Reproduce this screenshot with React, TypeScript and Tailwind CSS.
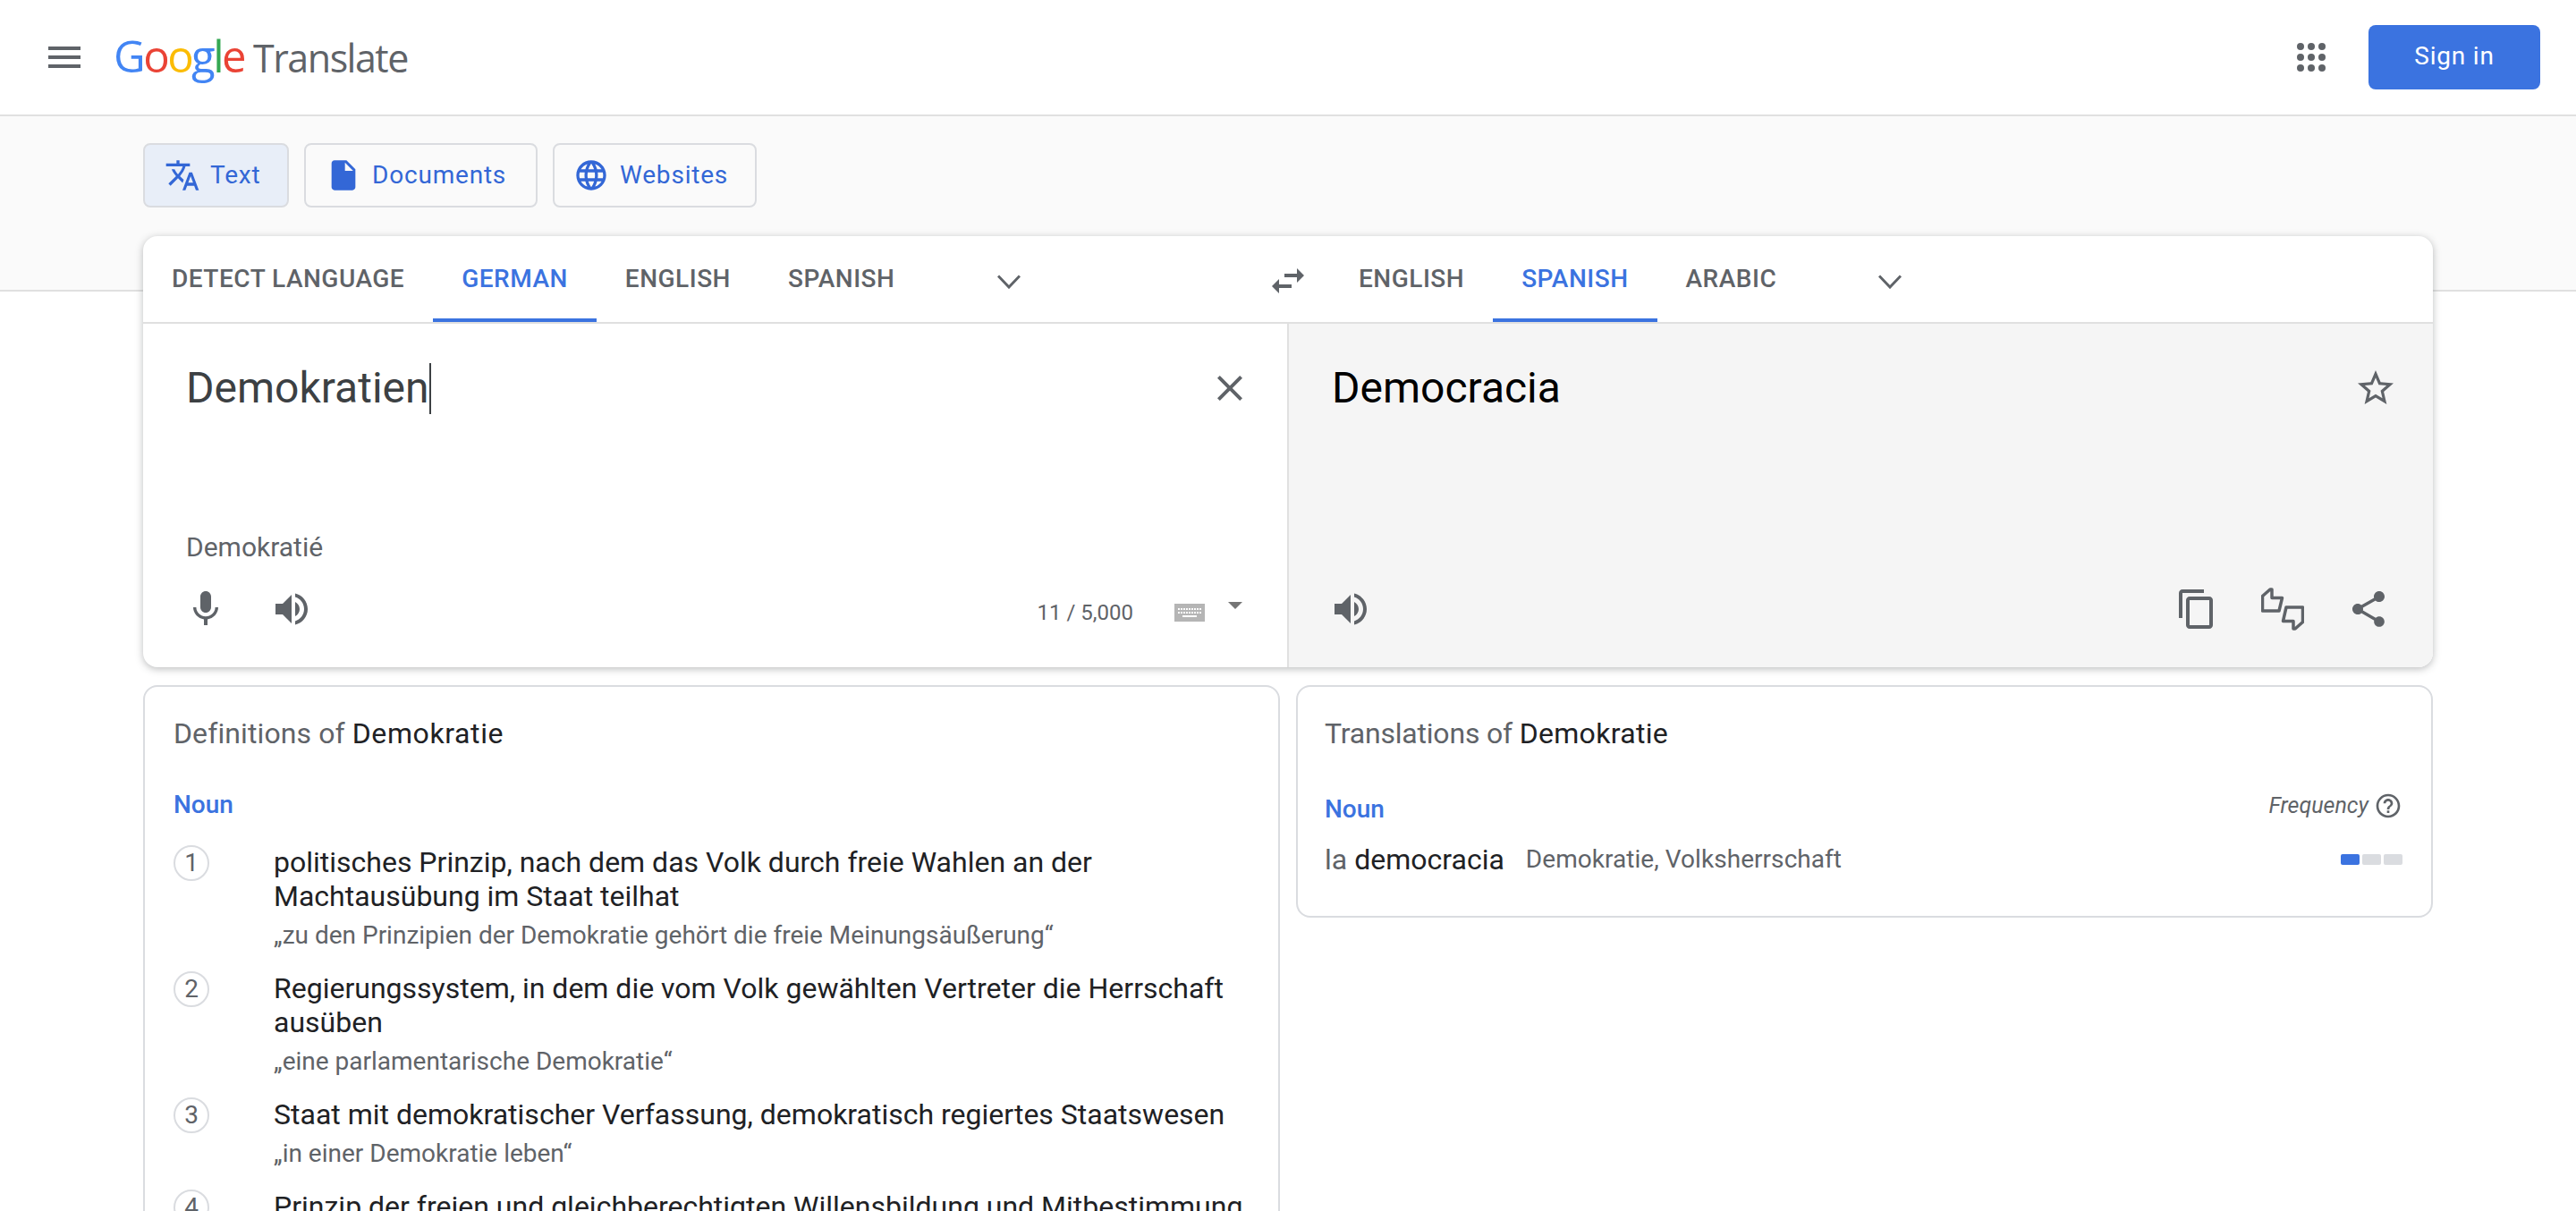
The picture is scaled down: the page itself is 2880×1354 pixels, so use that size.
import React from "react";

const GREY = "#5f6368";

const Icon = ({ d, size = 48, color = GREY }: { d: string; size?: number; color?: string }) => (
  <svg width={size} height={size} viewBox="0 0 24 24" fill={color} className="shrink-0">
    <path d={d} />
  </svg>
);

const paths = {
  menu: "M3 18h18v-2H3v2zm0-5h18v-2H3v2zm0-7v2h18V6H3z",
  translate:
    "M12.87 15.07l-2.54-2.51.03-.03c1.74-1.94 2.98-4.17 3.71-6.53H17V4h-7V2H8v2H1v1.99h11.17C11.5 7.92 10.44 9.75 9 11.35 8.07 10.32 7.3 9.19 6.69 8h-2c.73 1.63 1.73 3.17 2.98 4.56l-5.09 5.02L4 19l5-5 3.11 3.11.76-2.04zM18.5 10h-2L12 22h2l1.12-3h4.75L21 22h2l-4.5-12zm-2.62 7l1.62-4.33L19.12 17h-3.24z",
  doc: "M14 2H6c-1.1 0-1.99.9-1.99 2L4 20c0 1.1.89 2 1.99 2H18c1.1 0 2-.9 2-2V8l-6-6zm-1 7V3.5L18.5 9H13z",
  globe:
    "M11.99 2C6.47 2 2 6.48 2 12s4.47 10 9.99 10C17.52 22 22 17.52 22 12S17.52 2 11.99 2zm6.93 6h-2.95c-.32-1.25-.78-2.45-1.38-3.56 1.84.63 3.37 1.91 4.33 3.56zM12 4.04c.83 1.2 1.48 2.53 1.91 3.96h-3.82c.43-1.43 1.08-2.76 1.91-3.96zM4.26 14C4.1 13.36 4 12.69 4 12s.1-1.36.26-2h3.38c-.08.66-.14 1.32-.14 2 0 .68.06 1.34.14 2H4.26zm.82 2h2.95c.32 1.25.78 2.45 1.38 3.56-1.84-.63-3.37-1.9-4.33-3.56zm2.95-8H5.08c.96-1.66 2.49-2.93 4.33-3.56C8.81 5.55 8.35 6.75 8.03 8zM12 19.96c-.83-1.2-1.48-2.53-1.91-3.96h3.82c-.43 1.43-1.08 2.76-1.91 3.96zM14.34 14H9.66c-.09-.66-.16-1.32-.16-2 0-.68.07-1.35.16-2h4.68c.09.65.16 1.32.16 2 0 .68-.07 1.34-.16 2zm.25 5.56c.6-1.11 1.06-2.31 1.38-3.56h2.95c-.96 1.65-2.49 2.93-4.33 3.56zM16.36 14c.08-.66.14-1.32.14-2 0-.68-.06-1.34-.14-2h3.38c.16.64.26 1.31.26 2s-.1 1.36-.26 2h-3.38z",
  swap: "M6.99 11L3 15l3.99 4v-3H14v-2H6.99v-3zM21 9l-3.99-4v3H10v2h7.01v3L21 9z",
  close:
    "M19 6.41L17.59 5 12 10.59 6.41 5 5 6.41 10.59 12 5 17.59 6.41 19 12 13.41 17.59 19 19 17.59 13.41 12z",
  mic: "M12 14c1.66 0 2.99-1.34 2.99-3L15 5c0-1.66-1.34-3-3-3S9 3.34 9 5v6c0 1.66 1.34 3 3 3zm5.3-3c0 3-2.54 5.1-5.3 5.1S6.7 14 6.7 11H5c0 3.41 2.72 6.23 6 6.72V21h2v-3.28c3.28-.48 6-3.3 6-6.72h-1.7z",
  volume:
    "M3 9v6h4l5 5V4L7 9H3zm13.5 3c0-1.77-1.02-3.29-2.5-4.03v8.05c1.48-.73 2.5-2.25 2.5-4.02zM14 3.23v2.06c2.89.86 5 3.54 5 6.71s-2.11 5.85-5 6.71v2.06c4.01-.91 7-4.49 7-8.77s-2.99-7.86-7-8.77z",
  star: "M22 9.24l-7.19-.62L12 2 9.19 8.63 2 9.24l5.46 4.73L5.82 21 12 17.27 18.18 21l-1.63-7.03L22 9.24zM12 15.4l-3.76 2.27 1-4.28-3.32-2.88 4.38-.38L12 6.1l1.71 4.04 4.38.38-3.32 2.88 1 4.28L12 15.4z",
  copy: "M16 1H4c-1.1 0-2 .9-2 2v14h2V3h12V1zm3 4H8c-1.1 0-2 .9-2 2v14c0 1.1.9 2 2 2h11c1.1 0 2-.9 2-2V7c0-1.1-.9-2-2-2zm0 16H8V7h11v14z",
  share:
    "M18 16.08c-.76 0-1.44.3-1.96.77L8.91 12.7c.05-.23.09-.46.09-.7s-.04-.47-.09-.7l7.05-4.11c.54.5 1.25.81 2.04.81 1.66 0 3-1.34 3-3s-1.34-3-3-3-3 1.34-3 3c0 .24.04.47.09.7L8.04 9.81C7.5 9.31 6.79 9 6 9c-1.66 0-3 1.34-3 3s1.34 3 3 3c.79 0 1.5-.31 2.04-.81l7.12 4.16c-.05.21-.08.43-.08.65 0 1.61 1.31 2.92 2.92 2.92 1.61 0 2.92-1.31 2.92-2.92s-1.31-2.92-2.92-2.92z",
  help: "M11 18h2v-2h-2v2zm1-16C6.48 2 2 6.48 2 12s4.48 10 10 10 10-4.48 10-10S17.52 2 12 2zm0 18c-4.41 0-8-3.59-8-8s3.59-8 8-8 8 3.59 8 8-3.59 8-8 8zm0-14c-2.21 0-4 1.79-4 4h2c0-1.1.9-2 2-2s2 .9 2 2c0 2-3 1.75-3 5h2c0-2.25 3-2.5 3-5 0-2.21-1.79-4-4-4z",
};

const AppsIcon = () => (
  <svg width="32" height="32" viewBox="0 0 32 32" fill={GREY} className="shrink-0">
    {[4, 16, 28].map((y) =>
      [4, 16, 28].map((x) => <circle key={`${x}-${y}`} cx={x} cy={y} r="4" />)
    )}
  </svg>
);

const Chevron = () => (
  <svg width="26" height="16" viewBox="0 0 26 16" fill="none" stroke={GREY} strokeWidth="3" className="shrink-0">
    <path d="M1 1.5 L13 14 L25 1.5" />
  </svg>
);

const FeedbackIcon = () => (
  <svg width="48" height="48" viewBox="0 0 48 48" fill="none" stroke={GREY} strokeWidth="3.5" strokeLinejoin="round" className="shrink-0">
    <path d="M1.5 9.5 L10 2 L12 2 L12 11.5 L23.5 11.5 L20 26 L1.5 26 Z" />
    <path d="M46.5 38.5 L38 46 L36 46 L36 37.5 L24.5 37.5 L28 22 L46.5 22 Z" />
  </svg>
);

const KeyboardIcon = () => (
  <svg width="34" height="20" viewBox="0 0 34 20" className="shrink-0">
    <rect width="34" height="20" fill="#b5b5b5" />
    <path d="M4 6h26M4 10h26" stroke="#fff" strokeWidth="2" strokeDasharray="2 1" />
    <path d="M9 14h16" stroke="#fff" strokeWidth="2" />
  </svg>
);

const ModeButton = ({ icon, label, active, className }: { icon: string; label: string; active?: boolean; className: string }) => (
  <button
    className={`flex items-center h-[72px] rounded-lg border-2 border-[#dadce0] text-[28px] tracking-[0.8px] text-[#3367d6] ${active ? "bg-[#e8eef8]" : "bg-[#fafafa]"} ${className}`}
  >
    <Icon d={icon} size={40} color="#3367d6" />
    <span>{label}</span>
  </button>
);

const Tab = ({ label, active }: { label: string; active?: boolean }) => (
  <div
    className={`h-full flex items-center px-[32px] border-b-4 pt-1 text-[28px] font-medium tracking-[0.5px] whitespace-nowrap ${active ? "border-[#3b73e0] text-[#3b73e0]" : "border-transparent text-[#5f6368]"}`}
  >
    {label}
  </div>
);

const defs = [
  {
    text: "politisches Prinzip, nach dem das Volk durch freie Wahlen an der Machtausübung im Staat teilhat",
    example: "„zu den Prinzipien der Demokratie gehört die freie Meinungsäußerung“",
  },
  {
    text: "Regierungssystem, in dem die vom Volk gewählten Vertreter die Herrschaft ausüben",
    example: "„eine parlamentarische Demokratie“",
  },
  {
    text: "Staat mit demokratischer Verfassung, demokratisch regiertes Staatswesen",
    example: "„in einer Demokratie leben“",
  },
  {
    text: "Prinzip der freien und gleichberechtigten Willensbildung und Mitbestimmung",
    example: "",
  },
];

const App = () => {
  return (
    <div className="h-[1354px] overflow-hidden bg-white font-['Roboto',sans-serif]">
      {/* header */}
      <header className="h-[130px] flex items-center border-b-2 border-[#e0e0e0] pl-[48px] pr-[40px]">
        <Icon d={paths.menu} />
        <div className="ml-[31px] pb-[4px] flex items-baseline">
          <span className="font-['Open_Sans',sans-serif] text-[49px] leading-none tracking-[-2.5px] mr-[10px]">
            <span className="text-[#4285f4]">G</span>
            <span className="text-[#ea4335]">o</span>
            <span className="text-[#fbbc05]">o</span>
            <span className="text-[#4285f4]">g</span>
            <span className="text-[#34a853]">l</span>
            <span className="text-[#ea4335]">e</span>
          </span>
          <span className="text-[43px] leading-none text-[#5f6368] font-['Open_Sans',sans-serif] tracking-[-1.5px]">Translate</span>
        </div>
        <div className="ml-auto mr-[48px]">
          <AppsIcon />
        </div>
        <button className="w-[192px] h-[72px] rounded-lg bg-[#3b73e0] text-white text-[28px] tracking-[0.8px] pb-[2px]">Sign in</button>
      </header>

      {/* mode band */}
      <div className="h-[196px] bg-[#fafafa] border-b-2 border-[#e0e0e0] px-[160px] pt-[30px]">
        <div className="flex gap-[17px]">
          <ModeButton icon={paths.translate} label="Text" active className="w-[163px] pl-[22px] gap-[11px]" />
          <ModeButton icon={paths.doc} label="Documents" className="w-[261px] pl-[22px] gap-[12px]" />
          <ModeButton icon={paths.globe} label="Websites" className="w-[228px] pl-[21px] gap-[12px]" />
        </div>
      </div>

      {/* translator card */}
      <div className="relative -mt-[62px] mx-[160px] h-[482px] rounded-2xl bg-white overflow-hidden shadow-[0_2px_8px_rgba(60,64,67,0.35)]">
        <div className="h-[98px] flex border-b-2 border-[#e0e0e0]">
          <div className="w-[1236px] flex items-center">
            <Tab label="DETECT LANGUAGE" />
            <Tab label="GERMAN" active />
            <Tab label="ENGLISH" />
            <Tab label="SPANISH" />
            <div className="ml-[83px] pt-[6px]">
              <Chevron />
            </div>
          </div>
          <div className="w-[91px] flex items-center pl-[20px] pt-1">
            <Icon d={paths.swap} />
          </div>
          <div className="flex-1 flex items-center">
            <Tab label="ENGLISH" />
            <Tab label="SPANISH" active />
            <Tab label="ARABIC" />
            <div className="ml-[82px] pt-[6px]">
              <Chevron />
            </div>
          </div>
        </div>

        <div className="h-[384px] flex">
          <div className="w-[1281px] border-r-2 border-[#e0e0e0] pl-[48px] pt-[40px]">
            <div className="flex items-center pr-[40px]">
              <div className="flex items-center text-[48px] leading-[64px] text-[#3c4043]">
                Demokratien
                <span className="w-[2px] h-[57px] bg-[#3c4043]" />
              </div>
              <div className="ml-auto">
                <Icon d={paths.close} />
              </div>
            </div>
            <div className="mt-[128px] text-[30px] leading-[36px] text-[#5f6368]">Demokratié</div>
            <div className="mt-[27px] -ml-[2px] flex items-center pr-[50px]">
              <Icon d={paths.mic} />
              <div className="ml-[48px]">
                <Icon d={paths.volume} />
              </div>
              <span className="ml-auto text-[24px] text-[#5f6368] pt-[8px]">11 / 5,000</span>
              <div className="ml-[46px] pt-[8px]">
                <KeyboardIcon />
              </div>
              <div className="ml-[26px] mb-[8px] w-0 h-0 border-x-[8px] border-x-transparent border-t-[8px] border-t-[#757575]" />
            </div>
          </div>

          <div className="flex-1 bg-[#f5f5f5] pt-[40px] pl-[48px]">
            <div className="flex items-center pr-[40px]">
              <span className="text-[48px] leading-[64px] text-black">Democracia</span>
              <div className="ml-auto">
                <Icon d={paths.star} />
              </div>
            </div>
            <div className="mt-[191px] -ml-[3px] flex items-center pr-[48px]">
              <Icon d={paths.volume} />
              <div className="ml-auto flex gap-[48px]">
                <Icon d={paths.copy} />
                <FeedbackIcon />
                <Icon d={paths.share} />
              </div>
            </div>
          </div>
        </div>
      </div>

      {/* lower cards */}
      <div className="mt-[20px] mx-[160px] grid grid-cols-2 gap-[18px] items-start">
        <div className="rounded-2xl border-2 border-[#dadce0] px-[32px] pt-[32px]">
          <h2 className="text-[32px] leading-[40px] text-[#5f6368] tracking-[0.1px]">
            Definitions of <span className="text-[#202124] tracking-[0.6px]">Demokratie</span>
          </h2>
          <div className="mt-[42px] text-[28px] leading-[36px] font-medium text-[#3b73e0]">Noun</div>
          <div className="mt-[27px] flex flex-col gap-[22px]">
            {defs.map((def, i) => (
              <div key={i} className="flex gap-[72px]">
                <div className="w-10 h-10 shrink-0 rounded-full border-2 border-[#dadce0] flex items-center justify-center text-[28px] text-[#5f6368]">
                  {i + 1}
                </div>
                <div className="flex-1">
                  <div className="text-[32px] leading-[38px] text-[#202124]">{def.text}</div>
                  {def.example && (
                    <div className="mt-[7px] text-[28px] leading-[36px] text-[#5f6368]">{def.example}</div>
                  )}
                </div>
              </div>
            ))}
          </div>
        </div>

        <div className="h-[260px] rounded-2xl border-2 border-[#dadce0] pl-[30px] pr-[32px] pt-[32px]">
          <h2 className="text-[32px] leading-[40px] text-[#5f6368] tracking-[-0.2px]">
            Translations of <span className="text-[#202124] tracking-[0.3px]">Demokratie</span>
          </h2>
          <div className="mt-[29px] flex items-start justify-between">
            <div className="pt-[18px] text-[28px] leading-[36px] font-medium text-[#3b73e0]">Noun</div>
            <div className="flex items-center gap-[6px] pt-[13px]">
              <span className="text-[25px] italic text-[#5f6368]">Frequency</span>
              <Icon d={paths.help} size={32} />
            </div>
          </div>
          <div className="mt-[17px] flex items-center">
            <span className="text-[32px] leading-[40px] text-[#5f6368]">la</span>
            <span className="ml-[8px] text-[32px] leading-[40px] text-[#202124]">democracia</span>
            <span className="ml-[24px] text-[28px] tracking-[0.05px] text-[#5f6368]">Demokratie, Volksherrschaft</span>
            <div className="ml-auto flex gap-[3px] -mt-[1px]">
              <div className="w-[21px] h-[12px] rounded-[2px] bg-[#3b73e0]" />
              <div className="w-[21px] h-[12px] rounded-[2px] bg-[#dadce0]" />
              <div className="w-[21px] h-[12px] rounded-[2px] bg-[#dadce0]" />
            </div>
          </div>
        </div>
      </div>
    </div>
  );
};

export default App;
